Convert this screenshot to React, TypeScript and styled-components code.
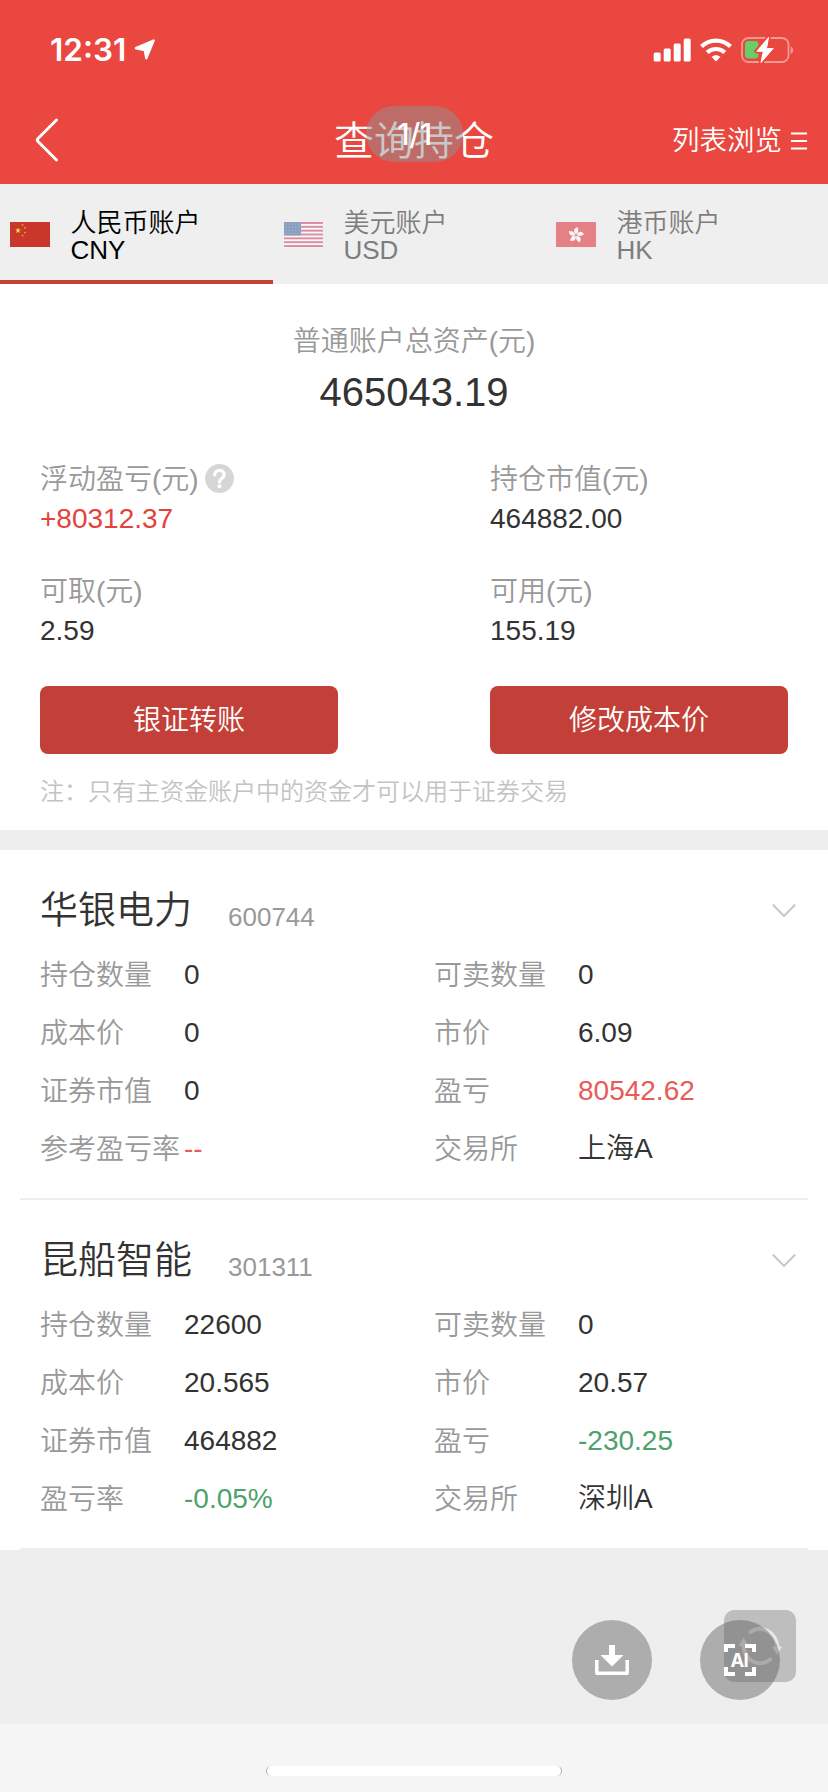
import React from 'react';
import styled, { createGlobalStyle } from 'styled-components';

const sans = `"Liberation Sans", "Noto Sans CJK SC", sans-serif`;

const GlobalStyle = createGlobalStyle`
  * { box-sizing: border-box; }
  body {
    margin: 0;
    background: #f5f5f5;
    font-family: ${sans};
    font-weight: 350;
    color: #333;
  }
  button { font: inherit; border: 0; padding: 0; background: none; color: inherit; }
  svg { display: block; flex: none; }
`;

const Screen = styled.div`
  position: relative;
  width: 828px;
  height: 1792px;
  display: flex;
  flex-direction: column;
  overflow: hidden;
`;

const Header = styled.header`
  height: 184px;
  background: #e9473f;
  color: #fff;
`;

const StatusBar = styled.div`
  height: 92px;
  padding: 8px 34px 0 50px;
  display: flex;
  align-items: center;
  justify-content: space-between;
`;

const Clock = styled.div`
  display: flex;
  align-items: center;
  gap: 8px;
  font: 600 31.5px/40px Inter, sans-serif;
`;

const StatusIcons = styled.div`
  display: flex;
  align-items: center;
  gap: 9px;
`;

const NavBar = styled.div`
  height: 92px;
  padding: 4px 20px 0 34px;
  display: grid;
  grid-template-columns: 1fr 160px 1fr;
  align-items: center;
`;

const TitleWrap = styled.div`
  position: relative;
  left: 7px;
`;

const Title = styled.h1`
  margin: 0;
  margin-left: -14px;
  padding-top: 2px;
  font-size: 40px;
  line-height: 54px;
  font-weight: 350;
  white-space: nowrap;
`;

const PagePill = styled.div`
  position: absolute;
  left: 18px;
  top: -6px;
  width: 97px;
  height: 56px;
  border-radius: 28px;
  background: rgba(146, 146, 146, 0.5);
  font: 500 30px/57px Inter, sans-serif;
  letter-spacing: -0.5px;
  text-align: center;
`;

const ListToggle = styled.button`
  justify-self: end;
  display: flex;
  align-items: center;
  gap: 8px;
  padding-top: 2px;
  font-size: 27.5px;
  line-height: 40px;
  color: #fff;
`;

const Tabs = styled.nav`
  height: 100px;
  background: #efefef;
  display: grid;
  grid-template-columns: repeat(3, 273px);
`;

const Tab = styled.button<{ $active?: boolean }>`
  display: flex;
  align-items: center;
  gap: 20.5px;
  padding: 8px 0 4px 10px;
  border-bottom: 4px solid ${(p) => (p.$active ? '#c64036' : 'transparent')};
  color: ${(p) => (p.$active ? '#000' : '#7d7d7d')};
  font-size: 26px;
  line-height: 27px;
  text-align: left;
  svg { opacity: ${(p) => (p.$active ? 1 : 0.62)}; }
`;

const TabText = styled.span`
  padding-top: 6px;
`;

const Summary = styled.section`
  height: 546px;
  padding: 37px 40px 0;
  background: #fff;
`;

const Total = styled.div`
  display: flex;
  flex-direction: column;
  align-items: center;
  gap: 6px;
  margin-bottom: 42px;
`;

const TotalValue = styled.div`
  font-size: 40px;
  line-height: 50px;
`;

const Label = styled.span`
  display: flex;
  align-items: center;
  gap: 6px;
  height: 40px;
  padding-top: 2px;
  font-size: 28px;
  line-height: 38px;
  color: #999;
  white-space: nowrap;
  svg { margin-top: -4px; }
`;

type Tone = 'up' | 'gain' | 'loss';
const tones: Record<Tone, string> = { up: '#e2433b', gain: '#e95b56', loss: '#4da26c' };

const Value = styled.span<{ $tone?: Tone }>`
  display: block;
  font-size: 28px;
  line-height: 40px;
  color: ${(p) => (p.$tone ? tones[p.$tone] : '#333')};
  white-space: nowrap;
`;

const Metrics = styled.div`
  display: grid;
  grid-template-columns: 450px 1fr;
  row-gap: 32px;
`;

const Actions = styled.div`
  display: flex;
  justify-content: space-between;
  margin-top: 35px;
`;

const ActionButton = styled.button`
  width: 298px;
  height: 68px;
  padding-top: 2px;
  border-radius: 8px;
  background: #c24038;
  color: #fff;
  font-size: 28px;
  line-height: 66px;
`;

const Note = styled.p`
  margin: 20px 0 0;
  font-size: 24px;
  line-height: 36px;
  color: #c3c3c3;
`;

const HoldingList = styled.main`
  border-top: 20px solid #eee;
  background: #fff;
`;

const HoldingCard = styled.article`
  height: 350px;
  margin: 0 20px;
  padding: 34px 12px 0 20px;
  border-bottom: 2px solid #eee;
`;

const HoldingHead = styled.div`
  display: flex;
  align-items: center;
  height: 52px;
  margin-bottom: 10px;
`;

const StockName = styled.h2`
  margin: 0;
  width: 188px;
  font-size: 38px;
  line-height: 52px;
  font-weight: 350;
`;

const StockCode = styled.span`
  flex: 1;
  padding-top: 14px;
  font-size: 26px;
  line-height: 36px;
  color: #999;
`;

const Fields = styled.div`
  display: grid;
  grid-template-columns: 144px 250px 144px 1fr;
  grid-auto-rows: 58px;
  align-items: center;
`;

const Footer = styled.footer`
  height: 174px;
  padding: 70px 48px 0 0;
  display: flex;
  justify-content: flex-end;
  gap: 48px;
  background: #eee;
`;

const RoundButton = styled.button`
  position: relative;
  z-index: 1;
  width: 80px;
  height: 80px;
  border-radius: 50%;
  background: rgba(93, 93, 93, 0.45);
`;

const RefreshButton = styled.button`
  position: absolute;
  left: 724px;
  top: 1610px;
  width: 72px;
  height: 72px;
  border-radius: 10px;
  background: rgba(0, 0, 0, 0.2);
`;

const HomeArea = styled.div`
  height: 68px;
  padding-top: 42px;
`;

const HomeBar = styled.div`
  width: 296px;
  height: 10px;
  margin-left: 266px;
  border-radius: 5px;
  background: #fff;
  border: solid #aaa;
  border-width: 0 1px;
`;

const LocationIcon = () => (
  <svg width="22" height="22" viewBox="0 0 22 22">
    <path d="M19.6 1.6 12.3 19.2 10.8 11 2 9.2Z" fill="#fff" stroke="#fff" strokeWidth="2.4" strokeLinejoin="round" />
  </svg>
);

const SignalIcon = () => (
  <svg width="38" height="24" viewBox="0 0 38 24" fill="#fff">
    <rect x="0.7" y="14.5" width="7" height="9" rx="1.5" />
    <rect x="10.7" y="10.5" width="7" height="13" rx="1.5" />
    <rect x="20.7" y="5.5" width="7" height="18" rx="1.5" />
    <rect x="30.7" y="0.5" width="7" height="23" rx="1.5" />
  </svg>
);

const WifiIcon = () => (
  <svg width="32" height="24" viewBox="0 0 32 24" fill="none" stroke="#fff" strokeWidth="4.2">
    <path d="M1.5 8.6C9.5 .6 22.5 .6 30.5 8.6" />
    <path d="M7.2 14.6C12.2 9.8 19.8 9.8 24.8 14.6" />
    <path d="M16 23.5 11.5 18.8C14 16.6 18 16.6 20.5 18.8Z" fill="#fff" stroke="none" />
  </svg>
);

const BatteryIcon = () => (
  <svg width="53" height="28" viewBox="0 0 53 28">
    <rect x="1" y="2" width="46.5" height="24" rx="6.5" fill="none" stroke="#f49a95" strokeWidth="1.8" />
    <path d="M49.500 10.500c3.600 1 3.600 6.500 0 7.500z" fill="#f0948f" />
    <rect x="4" y="5" width="13.5" height="17.5" rx="3.5" fill="#67cf67" />
    <path d="M27.5 1.5 15.5 15.3H22.3L20 26.5 32.5 12.5H25.5Z" fill="#fff" stroke="#e9473f" strokeWidth="4.5" strokeLinejoin="round" />
    <path d="M27.5 1.5 15.8 15.3H22.3L20 26.5 32.2 12.5H25.5Z" fill="#fff" stroke="#fff" strokeWidth="1" strokeLinejoin="round" />
  </svg>
);

const BackIcon = () => (
  <svg width="26" height="46" viewBox="0 0 26 46" fill="none" stroke="#fff" strokeWidth="3" strokeLinecap="round">
    <path d="M22.5 3 4 21.5Q2.5 23 4 24.5L22.5 43" />
  </svg>
);

const MenuIcon = () => (
  <svg width="18" height="18" viewBox="0 0 18 18" stroke="#fff" strokeWidth="2">
    <path d="M1 1.5H17M1 9H17M1 16.5H17" />
  </svg>
);

const star = '0,-1 .225,-.309 .951,-.309 .363,.118 .588,.809 0,.382 -.588,.809 -.363,.118 -.951,-.309 -.225,-.309';

const ChinaFlag = () => (
  <svg width="40" height="25" viewBox="0 0 40 25">
    <rect width="40" height="25" fill="#c9372a" />
    <polygon points={star} transform="translate(8 8.5) scale(3)" fill="#fce83a" />
    {[[12.5, 3], [15, 6], [15, 10.5], [12.5, 13.5]].map(([x, y]) => (
      <polygon key={y} points={star} transform={`translate(${x} ${y}) scale(1.3)`} fill="#f0b92f" />
    ))}
  </svg>
);

const UsaFlag = () => (
  <svg width="40" height="25" viewBox="0 0 40 25">
    <rect x="1" width="39" height="25" fill="#fff" />
    {[0, 1, 2, 3, 4, 5, 6].map((i) => (
      <rect key={i} x="1" y={i * 3.846} width="39" height="1.923" fill="#cf5273" />
    ))}
    <rect x="1" width="17" height="13.4" fill="#4e6ea3" />
    {[0, 1, 2, 3].map((r) =>
      [0, 1, 2, 3, 4].map((c) => (
        <circle key={`${r}-${c}`} cx={3 + c * 3.2} cy={2 + r * 3.1} r=".5" fill="#9fb0cc" />
      )),
    )}
  </svg>
);

const HongKongFlag = () => (
  <svg width="40" height="25" viewBox="0 0 40 25">
    <rect width="40" height="25" fill="#e03d47" />
    {[0, 72, 144, 216, 288].map((a) => (
      <path
        key={a}
        d="M0 -.8C-3.5 -2.5 -3.5 -7 .8 -8C.2 -6.5 3.6 -5 0 -.8Z"
        transform={`translate(20 13) rotate(${a + 8})`}
        fill="#fff"
      />
    ))}
  </svg>
);

const HelpIcon = () => (
  <svg width="29" height="29" viewBox="0 0 29 29" fill="none">
    <circle cx="14.5" cy="14.5" r="14.4" fill="#d6d6d6" />
    <path d="M9.7 11C9.7 4.8 19.3 4.8 19.3 10.8C19.3 14.2 14.5 14.3 14.5 18" stroke="#fff" strokeWidth="3.2" strokeLinecap="round" />
    <circle cx="14.5" cy="22.3" r="2" fill="#fff" />
  </svg>
);

const ChevronIcon = () => (
  <svg width="24" height="15" viewBox="0 0 24 15" fill="none" stroke="#c8c8c8" strokeWidth="2.1">
    <path d="M.7 1.5 12 13 23.3 1.5" />
  </svg>
);

const DownloadIcon = () => (
  <svg width="80" height="80" viewBox="0 0 80 80">
    <path d="M37 25h6v10h8.500L40 46.500 28.500 35H37z" fill="#fff" />
    <path d="M24.8 40v13.3h30.4V40" fill="none" stroke="#fff" strokeWidth="3.5" strokeLinejoin="round" />
  </svg>
);

const AiIcon = () => (
  <svg width="80" height="80" viewBox="0 0 80 80" fill="none" stroke="#fff" strokeWidth="4">
    <path d="M35 26H26V32M45 26H54V32M26 47V54H35M54 47V54H45" />
    <text x="30.5" y="46.8" fontFamily="Inter, sans-serif" fontSize="18.5" fontWeight="700" fill="#fff" stroke="none" letterSpacing="-.8">
      AI
    </text>
  </svg>
);

const RefreshIcon = () => (
  <svg width="72" height="72" viewBox="0 0 72 72" fill="none" stroke="#e9e9e9" strokeWidth="4" strokeLinecap="round">
    <path d="M26.5 22C36 15 51 20 53.5 37" />
    <path d="M46 49.5C36 57.5 21 52 19.5 36" />
    <path d="M48 36.5 58 36.5 53 45zM14.5 36 24.5 36 19.5 27.5z" fill="#e9e9e9" stroke="none" />
  </svg>
);

type Field = { label: string; value: string; tone?: Tone };
type Holding = { name: string; code: string; fields: Field[] };

const accounts = [
  { name: '人民币账户', currency: 'CNY', Flag: ChinaFlag },
  { name: '美元账户', currency: 'USD', Flag: UsaFlag },
  { name: '港币账户', currency: 'HK', Flag: HongKongFlag },
];

const metrics: (Field & { help?: boolean })[] = [
  { label: '浮动盈亏(元)', value: '+80312.37', tone: 'up', help: true },
  { label: '持仓市值(元)', value: '464882.00' },
  { label: '可取(元)', value: '2.59' },
  { label: '可用(元)', value: '155.19' },
];

const holdings: Holding[] = [
  {
    name: '华银电力',
    code: '600744',
    fields: [
      { label: '持仓数量', value: '0' },
      { label: '可卖数量', value: '0' },
      { label: '成本价', value: '0' },
      { label: '市价', value: '6.09' },
      { label: '证券市值', value: '0' },
      { label: '盈亏', value: '80542.62', tone: 'gain' },
      { label: '参考盈亏率', value: '--', tone: 'gain' },
      { label: '交易所', value: '上海A' },
    ],
  },
  {
    name: '昆船智能',
    code: '301311',
    fields: [
      { label: '持仓数量', value: '22600' },
      { label: '可卖数量', value: '0' },
      { label: '成本价', value: '20.565' },
      { label: '市价', value: '20.57' },
      { label: '证券市值', value: '464882' },
      { label: '盈亏', value: '-230.25', tone: 'loss' },
      { label: '盈亏率', value: '-0.05%', tone: 'loss' },
      { label: '交易所', value: '深圳A' },
    ],
  },
];

export default function App() {
  return (
    <Screen>
      <GlobalStyle />
      <Header>
        <StatusBar>
          <Clock>
            12:31
            <LocationIcon />
          </Clock>
          <StatusIcons>
            <SignalIcon />
            <WifiIcon />
            <BatteryIcon />
          </StatusIcons>
        </StatusBar>
        <NavBar>
          <BackIcon />
          <TitleWrap>
            <Title>查询持仓</Title>
            <PagePill>1/1</PagePill>
          </TitleWrap>
          <ListToggle>
            列表浏览
            <MenuIcon />
          </ListToggle>
        </NavBar>
      </Header>

      <Tabs>
        {accounts.map(({ name, currency, Flag }, i) => (
          <Tab key={currency} $active={i === 0}>
            <Flag />
            <TabText>
              {name}
              <br />
              {currency}
            </TabText>
          </Tab>
        ))}
      </Tabs>

      <Summary>
        <Total>
          <Label>普通账户总资产(元)</Label>
          <TotalValue>465043.19</TotalValue>
        </Total>
        <Metrics>
          {metrics.map((m) => (
            <div key={m.label}>
              <Label>
                {m.label}
                {m.help && <HelpIcon />}
              </Label>
              <Value $tone={m.tone}>{m.value}</Value>
            </div>
          ))}
        </Metrics>
        <Actions>
          <ActionButton>银证转账</ActionButton>
          <ActionButton>修改成本价</ActionButton>
        </Actions>
        <Note>注：只有主资金账户中的资金才可以用于证券交易</Note>
      </Summary>

      <HoldingList>
        {holdings.map((h) => (
          <HoldingCard key={h.code}>
            <HoldingHead>
              <StockName>{h.name}</StockName>
              <StockCode>{h.code}</StockCode>
              <ChevronIcon />
            </HoldingHead>
            <Fields>
              {h.fields.map((f) => (
                <React.Fragment key={f.label}>
                  <Label>{f.label}</Label>
                  <Value $tone={f.tone}>{f.value}</Value>
                </React.Fragment>
              ))}
            </Fields>
          </HoldingCard>
        ))}
      </HoldingList>

      <Footer>
        <RoundButton>
          <DownloadIcon />
        </RoundButton>
        <RoundButton>
          <AiIcon />
        </RoundButton>
      </Footer>
      <RefreshButton>
        <RefreshIcon />
      </RefreshButton>

      <HomeArea>
        <HomeBar />
      </HomeArea>
    </Screen>
  );
}
